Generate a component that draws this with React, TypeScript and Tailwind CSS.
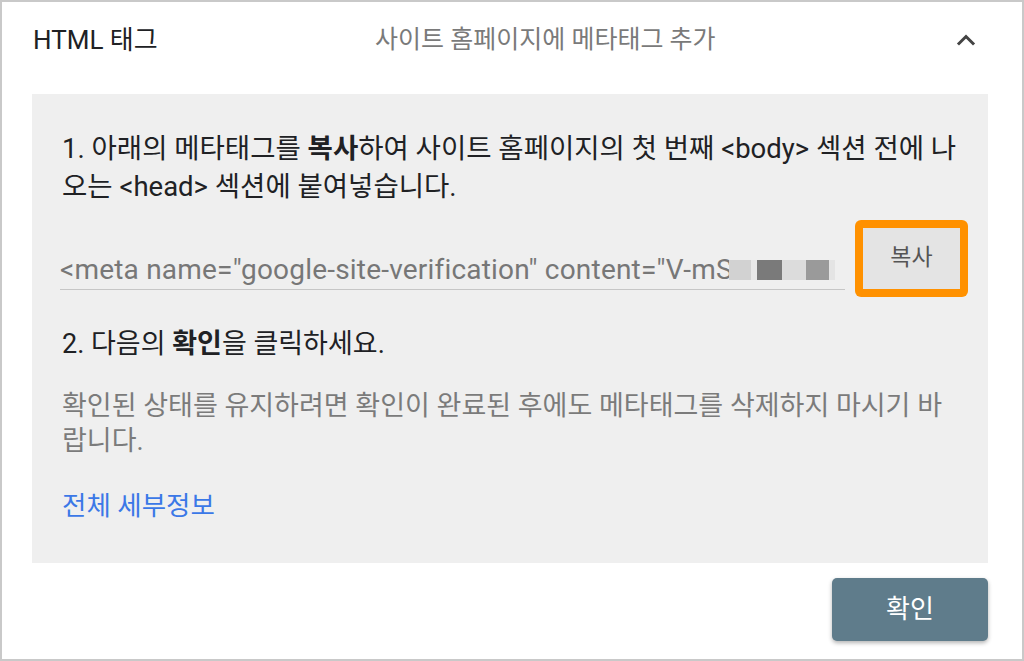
import React from 'react';

const font = { fontFamily: 'Roboto, "Noto Sans CJK KR", sans-serif' };

const ChevronUp = () => (
  <svg width="24" height="24" viewBox="0 0 24 24" fill="none">
    <path d="M5 15.5 12 8.5l7 7" stroke="#444444" strokeWidth="3" strokeLinecap="square" />
  </svg>
);

export default function App() {
  return (
    <div
      className="w-[1024px] h-[661px] border-2 border-[#c9c9c9] bg-white pl-[30px] pr-[34px] flex flex-col overflow-hidden"
      style={font}
    >
      {/* header */}
      <div className="h-[76px] flex items-center">
        <div className="w-[343px] pl-[1px] text-[26px] text-[#202124]">HTML 태그</div>
        <div className="flex-1 text-[25px] text-[#7a7a7a]">사이트 홈페이지에 메타태그 추가</div>
        <div className="w-[40px] flex justify-center mr-[2px]">
          <ChevronUp />
        </div>
      </div>

      {/* body panel */}
      <div className="mt-[16px] bg-[#efefef] pl-[30px] pr-[30px] pt-[36px] h-[469px] flex flex-col">
        <p className="text-[27.5px] leading-[38px] text-[#202124]">
          1. 아래의 메타태그를 <b className="font-bold">복사</b>하여 사이트 홈페이지의 첫 번째 &lt;body&gt; 섹션 전에 나오는 &lt;head&gt; 섹션에 붙여넣습니다.
        </p>

        <div className="mt-[14px] -mr-[12px] flex items-start">
          <div className="w-[785px] shrink-0 -ml-[2px] mt-[30px] h-[40px] border-b border-[#c6c6c6] flex items-center overflow-hidden whitespace-nowrap">
            <span className="text-[28px] tracking-[0.2px] text-[#777777]">&lt;meta name="google-site-verification" content="V-mS</span>
            <span className="flex items-center h-[20px] ml-[-4px]">
              <span className="w-[22px] h-[20px] bg-[#d2d2d2]" />
              <span className="w-[6px] h-[20px] bg-[#e8e8e8]" />
              <span className="w-[25px] h-[20px] bg-[#7a7a7a]" />
              <span className="w-[24px] h-[20px] bg-[#dcdcdc]" />
              <span className="w-[23px] h-[20px] bg-[#9a9a9a]" />
              <span className="w-[6px] h-[20px] bg-[#e4e4e4]" />
            </span>
          </div>
          <div className="ml-[10px] shrink-0 w-[113px] h-[77px] rounded-[6px] bg-[#ff9100] p-[8px]">
            <div className="w-full h-full bg-[#e4e4e4] flex items-center justify-center text-[23px] text-[#555555]">
              복사
            </div>
          </div>
        </div>

        <p className="mt-[28px] text-[27px] leading-[38px] text-[#202124]">
          2. 다음의 <b className="font-bold">확인</b>을 클릭하세요.
        </p>

        <p className="mt-[26px] text-[27px] leading-[35px] text-[#7b7b7b]">
          확인된 상태를 유지하려면 확인이 완료된 후에도 메타태그를 삭제하지 마시기 바랍니다.
        </p>

        <a className="mt-[28px] text-[26.5px] leading-[38px] text-[#3b78e7]">전체 세부정보</a>
      </div>

      {/* footer */}
      <div className="flex justify-end mt-[15px]">
        <button className="w-[156px] h-[63px] rounded-[5px] bg-[#5f7c8b] text-white text-[26px] shadow-[0_2px_4px_rgba(0,0,0,0.3)]">
          확인
        </button>
      </div>
    </div>
  );
}
